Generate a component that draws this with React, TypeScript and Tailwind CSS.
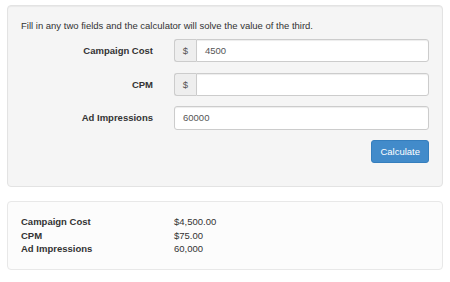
export default function App() {
  const font = { fontFamily: '"Liberation Sans", Arial, Helvetica, sans-serif' };
  const rows: [string, string | null, string][] = [
    ["Campaign Cost", "$", "4500"],
    ["CPM", "$", ""],
    ["Ad Impressions", null, "60000"],
  ];
  return (
    <div className="w-[450px] h-[282px] bg-white px-[7px] pt-[5px] text-[9.5px] leading-[13.6px] text-[#333]" style={font}>
      <div className="border border-[#e3e3e3] bg-[#f5f5f5] rounded-[4px] p-[13px] shadow-[inset_0_1px_1px_rgba(0,0,0,0.05)]">
        <p className="mb-[6.6px]">Fill in any two fields and the calculator will solve the value of the third.</p>
        {rows.map(([label, addon, value]) => (
          <div key={label} className="grid grid-cols-[132px_1fr] gap-x-[21px] mb-[10.4px]">
            <div className="flex items-center justify-end font-bold">{label}</div>
            <div className="flex h-[23.2px]">
              {addon && (
                <span className="flex items-center justify-center w-[22px] bg-[#eee] border border-[#ccc] rounded-l-[3px] border-r-0 text-[#555]">
                  {addon}
                </span>
              )}
              <div
                className={`flex-1 flex items-center bg-white border border-[#ccc] px-[8px] text-[#555] shadow-[inset_0_1px_1px_rgba(0,0,0,0.075)] ${
                  addon ? "rounded-r-[3px]" : "rounded-[3px]"
                }`}
              >
                {value}
              </div>
            </div>
          </div>
        ))}
        <div className="flex justify-end mb-[10px]">
          <button className="h-[23px] px-[8px] bg-[#428bca] border border-[#357ebd] rounded-[3px] text-white text-[9.5px]">
            Calculate
          </button>
        </div>
      </div>
      <div className="mt-[14px] border border-[#e8e8e8] bg-[#fcfcfc] rounded-[4px] p-[13px]">
        {[
          ["Campaign Cost", "$4,500.00"],
          ["CPM", "$75.00"],
          ["Ad Impressions", "60,000"],
        ].map(([k, v]) => (
          <div key={k} className="grid grid-cols-[153px_1fr]">
            <div className="font-bold">{k}</div>
            <div>{v}</div>
          </div>
        ))}
      </div>
    </div>
  );
}
